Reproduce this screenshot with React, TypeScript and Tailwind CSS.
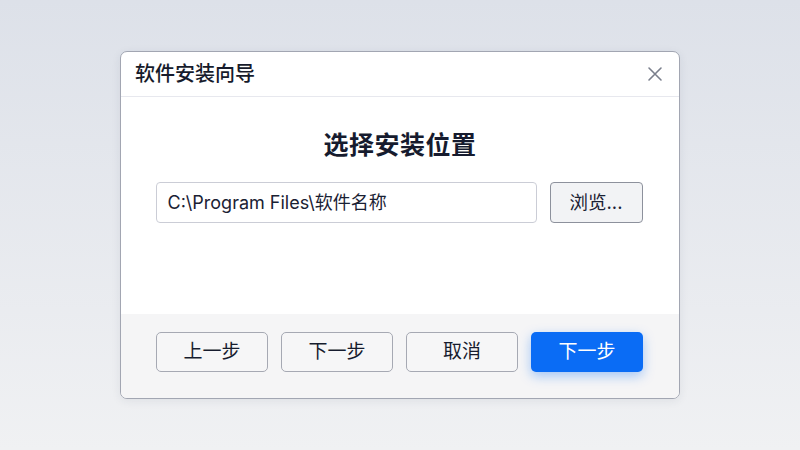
import React from "react";

const font = { fontFamily: 'Inter, "Noto Sans CJK SC", sans-serif' };

function FooterButton({ label, primary }: { label: string; primary?: boolean }) {
  return (
    <button
      className={
        primary
          ? "w-[112px] h-[40px] rounded-[5px] bg-[#0a6cf5] text-white text-[19px] shadow-[0_4px_12px_rgba(10,108,245,0.35)]"
          : "w-[112px] h-[40px] rounded-[5px] border border-[#a6a9b3] bg-[#f6f6f7] text-[#161c2e] text-[19px]"
      }
    >
      {label}
    </button>
  );
}

export default function App() {
  return (
    <div
      className="w-[800px] h-[450px] bg-gradient-to-b from-[#dde1e9] to-[#f0f1f3] pt-[51px] flex justify-center"
      style={font}
    >
      <div className="w-[560px] h-[348px] bg-white border border-[#a2a6b2] rounded-[7px] overflow-hidden flex flex-col shadow-[0_2px_10px_rgba(40,50,80,0.08)]">
        {/* title bar */}
        <div className="h-[45px] shrink-0 border-b border-[#e7e8ee] flex items-center justify-between pl-[14px] pr-[16px]">
          <span className="text-[20px] font-medium text-[#161b2b]">软件安装向导</span>
          <svg width="16" height="16" viewBox="0 0 16 16" className="text-[#7a7f8c]">
            <path d="M2 2L14 14M14 2L2 14" stroke="currentColor" strokeWidth="1.6" strokeLinecap="round" />
          </svg>
        </div>

        {/* body */}
        <div className="flex-1 flex flex-col items-center pt-[32px]">
          <h1 className="text-[25px] leading-[32px] font-semibold text-[#161b2e] tracking-[0.5px]">选择安装位置</h1>
          <div className="mt-[21px] flex gap-[13px] -translate-x-px">
            <div className="w-[381px] h-[41px] border border-[#cbcdd6] rounded-[4px] flex items-center pl-[11px] text-[18px] text-[#1a2133]">
              C:\Program Files\软件名称
            </div>
            <button className="w-[93px] h-[41px] border border-[#8d919c] rounded-[4px] bg-[#f2f3f5] text-[18.5px] text-[#1a2133]">
              浏览...
            </button>
          </div>
        </div>

        {/* footer */}
        <div className="h-[84px] shrink-0 bg-[#f5f5f6] flex justify-center gap-[13px] pt-[18px] pr-px">
          <FooterButton label="上一步" />
          <FooterButton label="下一步" />
          <FooterButton label="取消" />
          <FooterButton label="下一步" primary />
        </div>
      </div>
    </div>
  );
}
